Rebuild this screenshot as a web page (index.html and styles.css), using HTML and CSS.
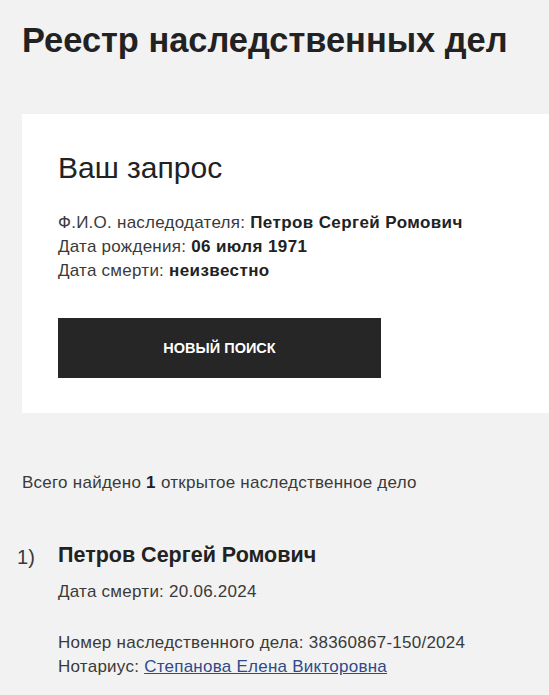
FILE: index.html
```html
<!DOCTYPE html>
<html lang="ru">
<head>
  <meta charset="UTF-8">
  <meta name="viewport" content="width=device-width, initial-scale=1.0">
  <title>Реестр наследственных дел</title>
  <link rel="stylesheet" href="styles.css">
</head>
<body>
  <h1 class="page-title">Реестр наследственных дел</h1>

  <div class="request-card">
    <h2 class="request-title">Ваш запрос</h2>
    <div class="request-info">
      <div>Ф.И.О. наследодателя: <b>Петров Сергей Ромович</b></div>
      <div>Дата рождения: <b>06 июля 1971</b></div>
      <div>Дата смерти: <b>неизвестно</b></div>
    </div>
    <button class="search-button">НОВЫЙ ПОИСК</button>
  </div>

  <p class="found-count">Всего найдено <b>1</b> открытое наследственное дело</p>

  <div class="case-item">
    <div class="case-number">1)</div>
    <div class="case-body">
      <div class="case-name">Петров Сергей Ромович</div>
      <div class="case-death">Дата смерти: 20.06.2024</div>
      <div class="case-details">
        <div>Номер наследственного дела: 38360867-150/2024</div>
        <div>Нотариус: <a href="#" class="notary-link">Степанова Елена Викторовна</a></div>
      </div>
    </div>
  </div>
</body>
</html>
```

FILE: styles.css
```css
body {
  font-family: "Liberation Sans", Arial, sans-serif;
  margin: 0;
  padding: 0 0 0 22px;
  background-color: #f2f2f2;
  color: #3a3a3a;
  font-size: 17px;
  letter-spacing: 0.25px;
}

b {
  color: #222;
  letter-spacing: 0.4px;
}

.page-title {
  font-size: 34.4px;
  font-weight: bold;
  letter-spacing: 0;
  color: #222;
  margin: 0;
  padding-top: 18px;
  line-height: 44px;
  height: 96px;
}

.request-card {
  background-color: #fff;
  padding: 37px 36px 35px;
}

.request-title {
  font-size: 30px;
  font-weight: normal;
  letter-spacing: 0;
  color: #222;
  margin: 0 0 26px;
  line-height: 34px;
}

.request-info {
  line-height: 24px;
}

.search-button {
  display: block;
  margin-top: 35px;
  width: 323px;
  height: 60px;
  border: none;
  background-color: #262626;
  color: #fff;
  font-family: inherit;
  font-size: 14.5px;
  font-weight: bold;
  cursor: pointer;
}

.found-count {
  margin: 58px 0 0;
  line-height: 24px;
}

.case-item {
  display: flex;
  margin-top: 46px;
  margin-left: -5px;
}

.case-number {
  width: 41px;
  font-size: 20px;
  line-height: 28px;
  padding-top: 2px;
}

.case-name {
  font-size: 21.5px;
  font-weight: bold;
  letter-spacing: 0;
  color: #222;
  line-height: 28px;
}

.case-death {
  margin-top: 11px;
  line-height: 24px;
}

.case-details {
  margin-top: 27px;
  line-height: 24px;
}

.notary-link {
  color: #2f4a8a;
}
```
